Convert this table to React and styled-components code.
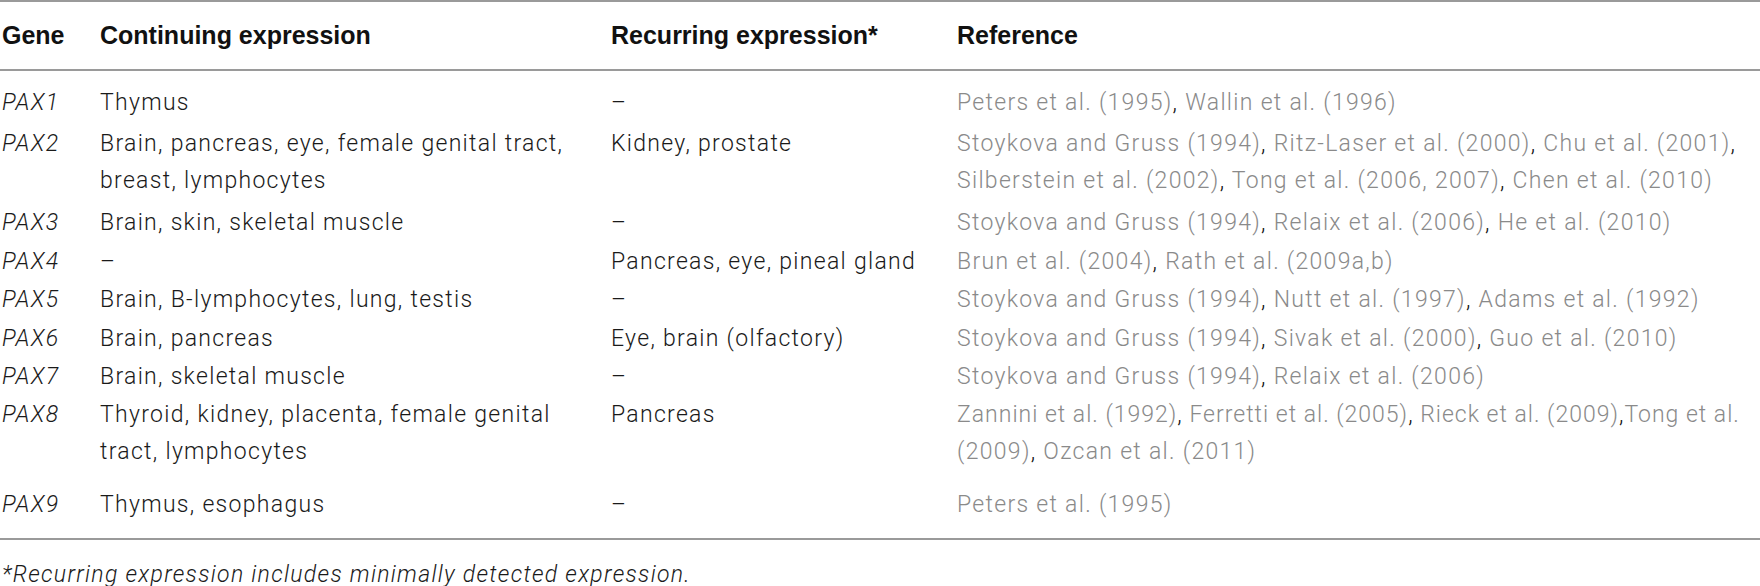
import React from 'react'
import { styled, createGlobalStyle } from 'styled-components'

const rows = [
  {
    gene: 'PAX1',
    cont: ['Thymus'],
    rec: ['–'],
    refs: [['Peters et al. (1995)', 'Wallin et al. (1996)']],
    after: 3,
  },
  {
    gene: 'PAX2',
    cont: ['Brain, pancreas, eye, female genital tract,', 'breast, lymphocytes'],
    rec: ['Kidney, prostate'],
    refs: [
      ['Stoykova and Gruss (1994)', 'Ritz-Laser et al. (2000)', 'Chu et al. (2001)', ''],
      ['Silberstein et al. (2002)', 'Tong et al. (2006, 2007)', 'Chen et al. (2010)'],
    ],
    after: 4,
  },
  {
    gene: 'PAX3',
    cont: ['Brain, skin, skeletal muscle'],
    rec: ['–'],
    refs: [['Stoykova and Gruss (1994)', 'Relaix et al. (2006)', 'He et al. (2010)']],
  },
  {
    gene: 'PAX4',
    cont: ['–'],
    rec: ['Pancreas, eye, pineal gland'],
    refs: [['Brun et al. (2004)', 'Rath et al. (2009a,b)']],
  },
  {
    gene: 'PAX5',
    cont: ['Brain, B-lymphocytes, lung, testis'],
    rec: ['–'],
    refs: [['Stoykova and Gruss (1994)', 'Nutt et al. (1997)', 'Adams et al. (1992)']],
  },
  {
    gene: 'PAX6',
    cont: ['Brain, pancreas'],
    rec: ['Eye, brain (olfactory)'],
    refs: [['Stoykova and Gruss (1994)', 'Sivak et al. (2000)', 'Guo et al. (2010)']],
  },
  {
    gene: 'PAX7',
    cont: ['Brain, skeletal muscle'],
    rec: ['–'],
    refs: [['Stoykova and Gruss (1994)', 'Relaix et al. (2006)']],
  },
  {
    gene: 'PAX8',
    cont: ['Thyroid, kidney, placenta, female genital', 'tract, lymphocytes'],
    rec: ['Pancreas'],
    // first line is set tight in the source (justified)
    refs: [
      ['Zannini et al. (1992)', 'Ferretti et al. (2005)', 'Rieck et al. (2009)', 'Tong et al.'],
      ['(2009)', 'Ozcan et al. (2011)'],
    ],
    tightFirst: true,
    after: 14,
  },
  { gene: 'PAX9', cont: ['Thymus, esophagus'], rec: ['–'], refs: [['Peters et al. (1995)']] },
]

const App = () => {
  return (
    <>
      <GlobalStyle />
      <Table>
        <HeadRow>
          <HeadCell>Gene</HeadCell>
          <HeadCell>Continuing expression</HeadCell>
          <HeadCell>Recurring expression*</HeadCell>
          <HeadCell>Reference</HeadCell>
        </HeadRow>
        <Body>
          {rows.map((r) => (
            <Row key={r.gene} $after={r.after || 0}>
              <GeneCell>{r.gene}</GeneCell>
              <Cell>
                {r.cont.map((l) => (
                  <Line key={l}>{l}</Line>
                ))}
              </Cell>
              <Cell>
                {r.rec.map((l) => (
                  <Line key={l}>{l}</Line>
                ))}
              </Cell>
              <Cell>
                {r.refs.map((line, i) => (
                  <Line key={i} $tight={r.tightFirst && i === 0}>
                    {line.map((ref, j) => (
                      <React.Fragment key={j}>
                        {j > 0 && <Comma>{r.tightFirst && i === 0 && j === line.length - 1 ? ',' : ', '}</Comma>}
                        {ref && <Ref>{ref}</Ref>}
                      </React.Fragment>
                    ))}
                  </Line>
                ))}
              </Cell>
            </Row>
          ))}
        </Body>
        <Footnote>*Recurring expression includes minimally detected expression.</Footnote>
      </Table>
    </>
  )
}

export default App

const GlobalStyle = createGlobalStyle`
  body {
    margin:0;
    background:#fff;
    font-family:Roboto, "Liberation Sans", Arial, sans-serif;
  }
`

const Table = styled.div`
  width:1760px;
  border-top:2px solid #9a9a9a;
  color:#1a1a1a;
`

const columns = `98px 511px 346px 1fr`

const HeadRow = styled.div`
  display:grid;
  grid-template-columns:${columns};
  height:67px;
  align-items:center;
  padding-left:2px;
  border-bottom:2px solid #9a9a9a;
`

const HeadCell = styled.div`
  font-family:"Liberation Sans", Arial, sans-serif;
  font-weight:700;
  font-size:25px;
  color:#111;
`

const Body = styled.div`
  padding:12px 0 15px;
  border-bottom:2px solid #9a9a9a;
`

const Row = styled.div`
  display:grid;
  grid-template-columns:${columns};
  padding:0.7px 0 0.7px 2px;
  margin-bottom:${(p) => p.$after}px;
  font-size:23px;
  font-weight:300;
  line-height:37px;
  letter-spacing:1.3px;
`

const Cell = styled.div``

const GeneCell = styled.div`
  font-style:italic;
`

const Line = styled.div`
  white-space:nowrap;
  letter-spacing:${(p) => (p.$tight ? '1px' : 'inherit')};
`

const Ref = styled.span`
  color:#8a8a8a;
`

const Comma = styled.span`
  color:#111;
`

const Footnote = styled.div`
  padding:22px 0 0 2px;
  font-size:23px;
  font-weight:300;
  font-style:italic;
  line-height:26px;
  letter-spacing:1.3px;
`
